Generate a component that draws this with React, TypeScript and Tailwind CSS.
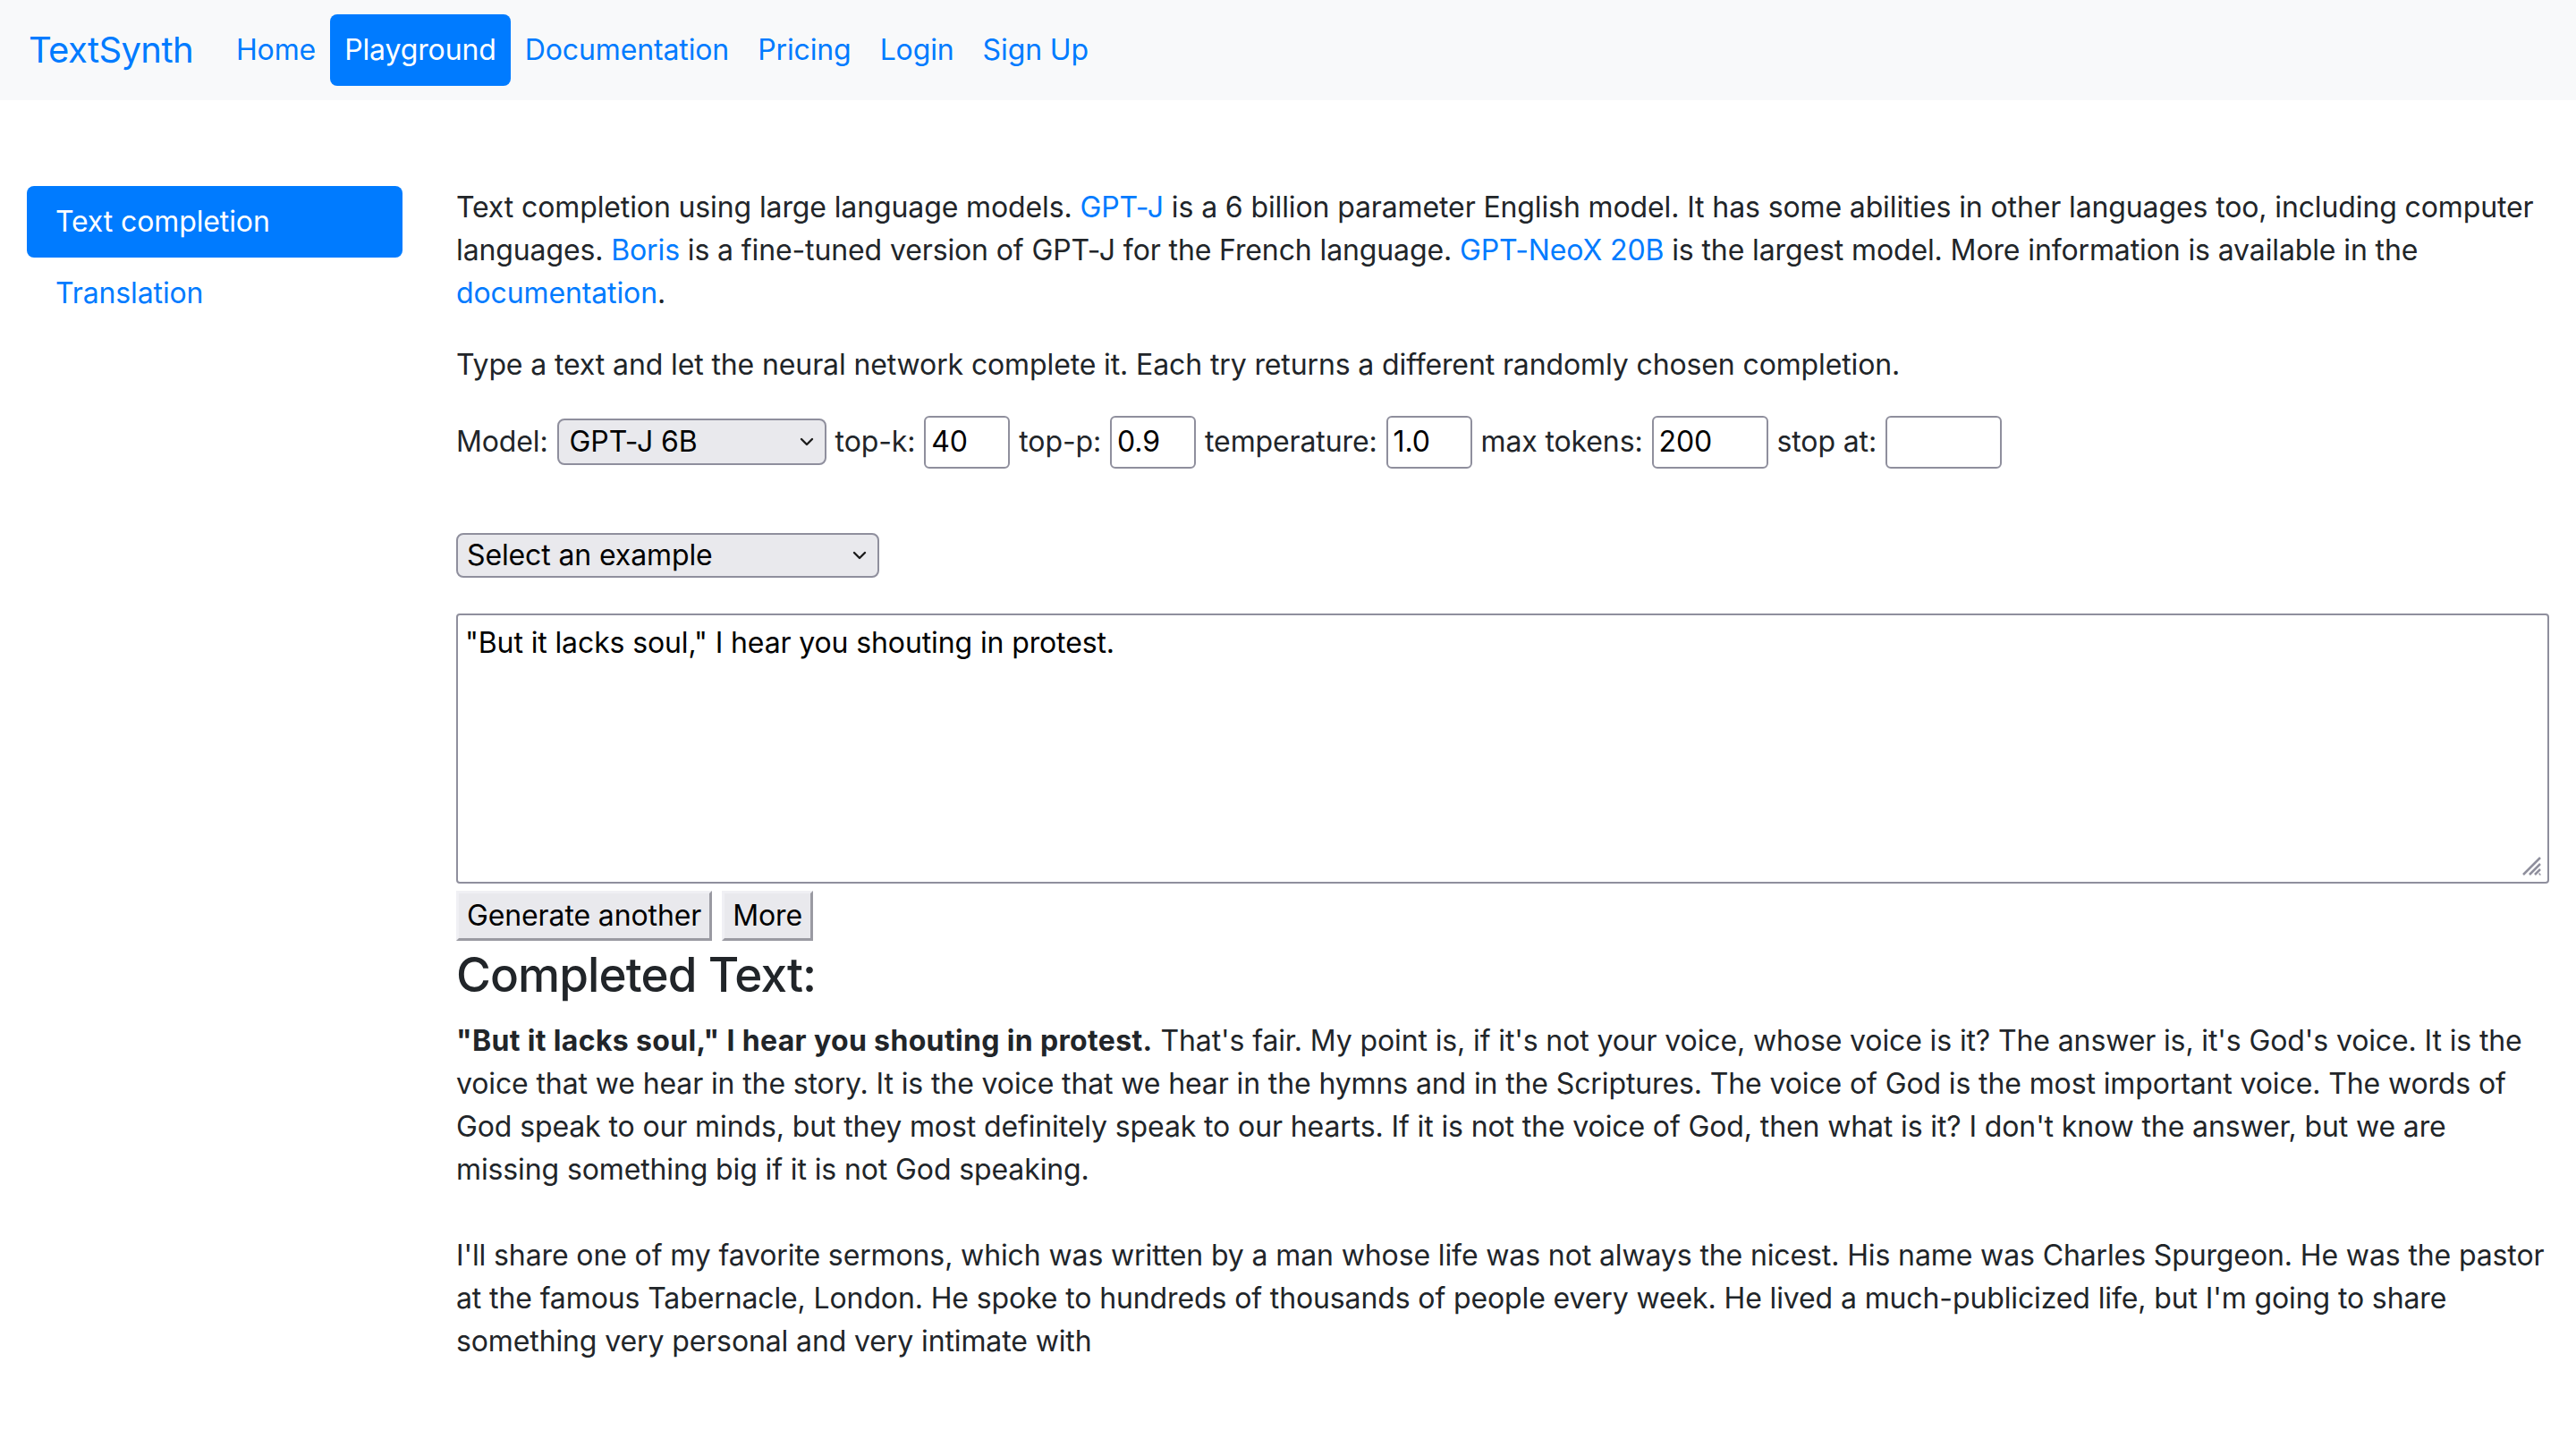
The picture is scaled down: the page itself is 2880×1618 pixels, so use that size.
import React from 'react'

const navLinks = ['Home', 'Playground', 'Documentation', 'Pricing', 'Login', 'Sign Up']

function Chevron() {
  return (
    <svg width="16" height="10" viewBox="0 0 16 10" className="shrink-0">
      <path d="M2 2 L8 8 L14 2" fill="none" stroke="#1c1c1c" strokeWidth="2.4" strokeLinecap="round" strokeLinejoin="round" />
    </svg>
  )
}

function Field({ value, w }: { value: string; w: string }) {
  return (
    <div className={`${w} h-[59px] border-2 border-[#8f8f9d] rounded-[6px] bg-white flex items-center px-[6px] text-black`}>
      {value}
    </div>
  )
}

const btn =
  'h-[56px] px-[9px] flex items-center bg-[#e9e9ed] text-black border-[3px] border-t-[#f0f0f4] border-l-[#f0f0f4] border-r-[#9a9aa2] border-b-[#9a9aa2]'

export default function App() {
  return (
    <div
      className="min-h-screen bg-white text-[#212529] text-[32px] leading-[48px] tracking-[-0.12px]"
      style={{ fontFamily: 'Inter, "Noto Sans", sans-serif' }}
    >
      <nav className="h-[112px] bg-[#f8f9fa] flex items-center px-[32px]">
        <span className="text-[40px] leading-[60px] text-[#007bff] mr-[32px] tracking-[-0.6px]">TextSynth</span>
        <div className="flex items-center">
          {navLinks.map((l) => (
            <span
              key={l}
              className={
                l === 'Playground'
                  ? 'px-[16px] py-[16px] rounded-[8px] bg-[#007bff] text-white'
                  : 'px-[16px] py-[16px] text-[#007bff]'
              }
            >
              {l}
            </span>
          ))}
        </div>
      </nav>

      <div className="flex mt-[96px]">
        <div className="w-[480px] px-[30px] shrink-0">
          <div className="px-[32px] py-[16px] rounded-[8px] bg-[#007bff] text-white">Text completion</div>
          <div className="px-[32px] py-[16px] text-[#007bff]">Translation</div>
        </div>

        <div className="flex-1 px-[30px] pb-[80px]">
          <p className="mb-[32px]">
            Text completion using large language models. <span className="text-[#007bff]">GPT-J</span> is a 6 billion
            parameter English model. It has some abilities in other languages too, including computer languages.{' '}
            <span className="text-[#007bff]">Boris</span> is a fine-tuned version of GPT-J for the French language.{' '}
            <span className="text-[#007bff]">GPT-NeoX 20B</span> is the largest model. More information is available
            in the <span className="text-[#007bff]">documentation</span>.
          </p>
          <p className="mb-[32px]">
            Type a text and let the neural network complete it. Each try returns a different randomly chosen completion.
          </p>

          <div className="flex items-center h-[60px] gap-[10px]">
            <span>Model:</span>
            <div className="w-[301px] h-[52px] border-2 border-[#8f8f9d] rounded-[8px] bg-[#e9e9ed] flex items-center justify-between pl-[12px] pr-[12px] text-black">
              <span>GPT-J 6B</span>
              <Chevron />
            </div>
            <span>top-k:</span>
            <Field value="40" w="w-[96px]" />
            <span>top-p:</span>
            <Field value="0.9" w="w-[96px]" />
            <span>temperature:</span>
            <Field value="1.0" w="w-[96px]" />
            <span>max tokens:</span>
            <Field value="200" w="w-[130px]" />
            <span>stop at:</span>
            <Field value="" w="w-[130px]" />
          </div>

          <div className="mt-[72px] w-[473px] h-[50px] border-2 border-[#8f8f9d] rounded-[8px] bg-[#e9e9ed] flex items-center justify-between pl-[10px] pr-[12px] text-black">
            <span>Select an example</span>
            <Chevron />
          </div>

          <div className="relative mt-[40px] h-[302px] border-2 border-[#8f8f9d] rounded-[4px] bg-white px-[8px] py-[12px] text-black leading-[38px]">
            "But it lacks soul," I hear you shouting in protest.
            <svg width="24" height="24" viewBox="0 0 24 24" className="absolute right-[6px] bottom-[6px]">
              <path d="M22 3 L3 22 M22 10 L10 22 M22 16 L16 22 M22 21 L21 22" stroke="#8f8f9d" strokeWidth="2.5" />
            </svg>
          </div>

          <div className="flex gap-[11px] mt-[8px]">
            <div className={btn}>Generate another</div>
            <div className={btn}>More</div>
          </div>

          <h3 className="mt-[5px] mb-[16px] text-[53px] leading-[67px] font-medium tracking-[-0.9px]">Completed Text:</h3>

          <p className="whitespace-pre-wrap">
            <b className="font-bold tracking-[0.35px]">"But it lacks soul," I hear you shouting in protest.</b>
            {` That's fair. My point is, if it's not your voice, whose voice is it? The answer is, it's God's voice. It is the voice that we hear in the story. It is the voice that we hear in the hymns and in the Scriptures. The voice of God is the most important voice. The words of God speak to our minds, but they most definitely speak to our hearts. If it is not the voice of God, then what is it? I don't know the answer, but we are missing something big if it is not God speaking.

I'll share one of my favorite sermons, which was written by a man whose life was not always the nicest. His name was Charles Spurgeon. He was the pastor at the famous Tabernacle, London. He spoke to hundreds of thousands of people every week. He lived a much-publicized life, but I'm going to share something very personal and very intimate with`}
          </p>
        </div>
      </div>
    </div>
  )
}
